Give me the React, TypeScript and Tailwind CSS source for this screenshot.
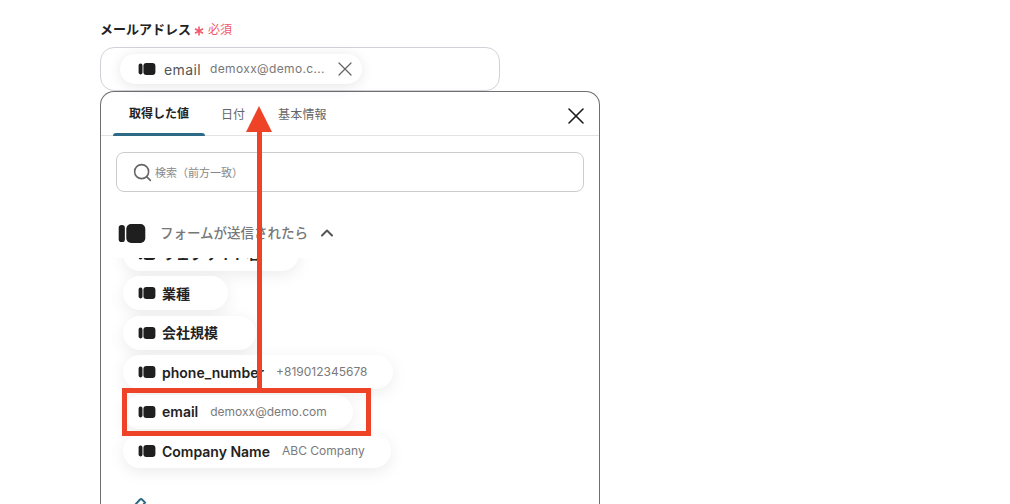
import { X, Search, ChevronUp } from "lucide-react";

const font = { fontFamily: '"Inter", "Noto Sans CJK JP", sans-serif' };

function Logo({ className }: { className: string }) {
  return (
    <svg viewBox="0 0 28 20" className={className} fill="#1f1f1f">
      <rect x="0" y="1" width="6.5" height="18" rx="3" />
      <rect x="8" y="0" width="20" height="20" rx="5" />
    </svg>
  );
}

function ValuePill({
  name,
  value,
  width,
}: {
  name: string;
  value?: string;
  width: string;
}) {
  return (
    <div
      className={`flex h-[34px] shrink-0 items-center rounded-full bg-white pl-[15px] shadow-[0_4px_16px_rgba(0,0,0,0.08)] ${width}`}
    >
      <Logo className="h-[12px] w-[18px] shrink-0" />
      <span className="ml-[6px] text-[14px] font-semibold text-[#222]">{name}</span>
      {value && <span className="ml-3 text-[12px] text-[#7a7a7a]">{value}</span>}
    </div>
  );
}

export default function App() {
  return (
    <div className="relative h-[504px] w-[1010px] overflow-hidden bg-white" style={font}>
      <div className="ml-[100px] w-[500px] pt-[20px]">
        <div className="flex h-[19px] items-center">
          <span className="text-[13px] font-semibold text-[#222]">メールアドレス</span>
          <svg className="ml-[3px] mt-[3px]" width="10" height="10" viewBox="0 0 10 10" stroke="#ef5a6a" strokeWidth="1.6">
            <path d="M5 0.5V9.5M1 2.8L9 7.2M9 2.8L1 7.2" />
          </svg>
          <span className="ml-[4px] text-[12px] text-[#ef5a6a]">必須</span>
        </div>

        <div className="mt-[8px] flex h-[44px] w-[400px] items-center rounded-[14px] border border-[#cfd2d8] pl-[19px]">
          <div className="flex h-[30px] w-[242px] items-center rounded-full bg-white pl-[18px] shadow-[0_2px_14px_rgba(0,0,0,0.1)]">
            <Logo className="h-[12px] w-[18px] shrink-0" />
            <span className="ml-[8px] text-[14px] tracking-[0.4px] text-[#555]">email</span>
            <span className="ml-[9px] text-[12px] tracking-[0.35px] text-[#777]">demoxx@demo.c...</span>
            <X className="ml-[8px] h-[24px] w-[24px] shrink-0 text-[#666]" strokeWidth={1.3} />
          </div>
        </div>

        <div className="h-[440px] overflow-hidden rounded-t-[14px] border border-b-0 border-[#6f6f6f] bg-white">
          <div className="flex h-[44px] items-start border-b border-[#e3e3e3] pl-[12px]">
            <div className="flex h-[44px] w-[92px] flex-col">
              <div className="flex flex-1 items-center justify-center pt-[2px] text-[12px] font-semibold text-[#222]">
                取得した値
              </div>
              <div className="h-[3px] rounded-t-[4px] bg-[#2d6a86]" />
            </div>
            <div className="flex h-[44px] items-center pl-[16px] pt-[1px] text-[12px] text-[#666]">日付</div>
            <div className="flex h-[44px] items-center pl-[33px] pt-[1px] text-[12px] tracking-[0.2px] text-[#666]">基本情報</div>
            <X className="ml-auto mr-[9px] mt-[10px] h-[28px] w-[28px] text-[#1a1a1a]" strokeWidth={1.3} />
          </div>

          <div className="mx-[15px] mt-[16px] flex h-[40px] items-center rounded-[8px] border border-[#cccccc] pl-[15px]">
            <Search className="h-[21px] w-[21px] text-[#666]" strokeWidth={1.8} />
            <span className="ml-[2px] mt-[2px] text-[11px] text-[#888]">検索（前方一致）</span>
          </div>

          <div className="ml-[17px] mt-[26px] flex h-[30px] items-center">
            <Logo className="h-[19px] w-[28px]" />
            <span className="ml-[14px] text-[13.5px] font-medium text-[#777]">フォームが送信されたら</span>
            <ChevronUp className="ml-[9px] h-[20px] w-[20px] text-[#555]" strokeWidth={2.4} />
          </div>

          <div className="mt-[10px] h-[250px] overflow-hidden pl-[22px]">
            <div className="-mt-[21.5px] flex flex-col gap-[5.5px]">
              <ValuePill name="ウェブサイト名" width="w-[176px]" />
              <ValuePill name="業種" width="w-[105px]" />
              <ValuePill name="会社規模" width="w-[133px]" />
              <ValuePill name="phone_number" value="+819012345678" width="w-[270px]" />
              <ValuePill name="email" value="demoxx@demo.com" width="w-[230px]" />
              <ValuePill name="Company Name" value="ABC Company" width="w-[268px]" />
              <svg className="ml-[9px] mt-[22px] shrink-0" width="18" height="18" viewBox="0 0 18 18" fill="none" stroke="#2d6a86" strokeWidth="2">
                <path d="M3 9L8 3.5Q9 2.5 10 3.5L13 6.5L11 9" />
              </svg>
            </div>
          </div>
        </div>
      </div>

      {/* annotation */}
      <div className="absolute left-[257px] top-[130px] h-[262px] w-[5px] bg-[#ee4326]" />
      <svg className="absolute left-[246px] top-[106px]" width="26" height="26" viewBox="0 0 26 26">
        <polygon points="13,0 26,26 0,26" fill="#ee4326" />
      </svg>
      <div className="absolute left-[122px] top-[388px] h-[48px] w-[249px] border-[5px] border-[#ee4326]" />
    </div>
  );
}
